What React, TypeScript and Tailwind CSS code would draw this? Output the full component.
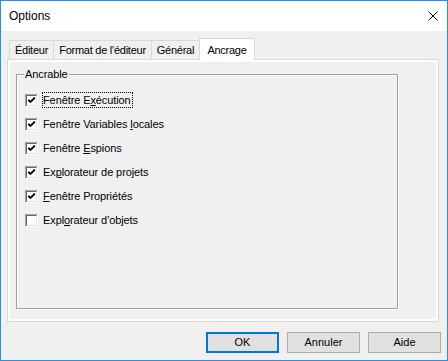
import React from "react";

const F = { fontFamily: '"Liberation Sans", Arial, sans-serif' } as const;

function Check({ checked }: { checked: boolean }) {
  return (
    <div className="w-[13px] h-[13px] shrink-0 border border-t-[#a0a0a0] border-l-[#a0a0a0] border-b-white border-r-white">
      <div className="w-full h-full border border-t-[#696969] border-l-[#696969] border-b-[#e3e3e3] border-r-[#e3e3e3] bg-white flex items-center justify-center">
        {checked && (
          <svg width="9" height="9" viewBox="0 0 9 9">
            <path d="M1.2 3.8 L3.4 6 L7.8 1.6" fill="none" stroke="#000" strokeWidth="1.9" />
          </svg>
        )}
      </div>
    </div>
  );
}

function Row({ checked, focus, children }: { checked: boolean; focus?: boolean; children: React.ReactNode }) {
  return (
    <div className="h-[24px] flex items-center gap-[4px]">
      <Check checked={checked} />
      <span
        className={
          "h-[16px] flex items-center pl-0 pr-[1px] border " +
          (focus ? "border-dotted border-black" : "border-transparent")
        }
      >
        <span className="whitespace-pre">{children}</span>
      </span>
    </div>
  );
}

function Tab({ label, w, selected, first }: { label: string; w: string; selected?: boolean; first?: boolean }) {
  if (selected) {
    return (
      <div
        className={`${w} h-[22px] -mb-px -ml-px relative z-10 bg-white border-t border-l border-r border-[#d9d9d9] flex items-start justify-center pt-[3px] text-[11px] tracking-[-0.25px] text-black`}
      >
        {label}
      </div>
    );
  }
  return (
    <div
      className={`${w} h-[19px] ${first ? "" : "-ml-px"} bg-[#f0f0f0] border-t border-l border-r border-[#d9d9d9] flex items-center justify-center pt-[1px] text-[11px] tracking-[-0.25px] text-black`}
    >
      {label}
    </div>
  );
}

function Btn({ label, def }: { label: string; def?: boolean }) {
  return (
    <div
      className={
        "w-[73px] h-[21px] bg-[#e1e1e1] flex items-center justify-center text-[11px] text-black " +
        (def ? "border-2 border-[#0078d7]" : "border border-[#adadad]")
      }
    >
      {label}
    </div>
  );
}

export default function App() {
  return (
    <div style={F} className="w-[448px] h-[361px] border border-[#2b8fe8] bg-[#f0f0f0] flex flex-col overflow-hidden">
      <div className="h-[30px] bg-white flex items-center justify-between pl-[8px] pr-[9px] shrink-0">
        <span className="text-[12px] text-black">Options</span>
        <svg width="10" height="10" viewBox="0 0 10 10">
          <path d="M0.5 0.5 L9.5 9.5 M9.5 0.5 L0.5 9.5" stroke="#000" strokeWidth="1" />
        </svg>
      </div>
      <div className="flex-1 flex flex-col pt-[7px] pl-[6px] pr-[7px]">
        <div className="h-[21px] flex items-end pl-[2px]">
          <Tab label="Éditeur" w="w-[45px]" first />
          <Tab label="Format de l'éditeur" w="w-[99px]" />
          <Tab label="Général" w="w-[49px]" />
          <Tab label="Ancrage" w="w-[56px]" selected />
        </div>
        <div className="w-[432px] h-[263px] border border-[#d9d9d9]">
          <div className="w-full h-full border-2 border-white bg-[#f0f0f0] pl-[6px] pt-[12px]">
            <div className="relative w-[382px] h-[235px] border border-[#a0a0a0] shadow-[inset_1px_1px_0_#ffffff,1px_1px_0_#ffffff] pl-[8px] pt-[13px] text-[11px] tracking-[-0.1px] text-black">
              <span className="absolute left-[7px] -top-[8px] bg-[#f0f0f0] px-[1px] leading-[14px]">Ancrable</span>
              <Row checked focus>
                Fenêtre E<u>x</u>écution
              </Row>
              <Row checked>
                Fenêtre Variables <u>l</u>ocales
              </Row>
              <Row checked>
                Fenêtre <u>E</u>spions
              </Row>
              <Row checked>
                Ex<u>p</u>lorateur de projets
              </Row>
              <Row checked>
                <u>F</u>enêtre Propriétés
              </Row>
              <Row checked={false}>
                Expl<u>o</u>rateur d'objets
              </Row>
            </div>
          </div>
        </div>
        <div className="flex justify-end gap-[8px] mt-[10px] mr-[-1px]">
          <Btn label="OK" def />
          <Btn label="Annuler" />
          <Btn label="Aide" />
        </div>
      </div>
    </div>
  );
}
